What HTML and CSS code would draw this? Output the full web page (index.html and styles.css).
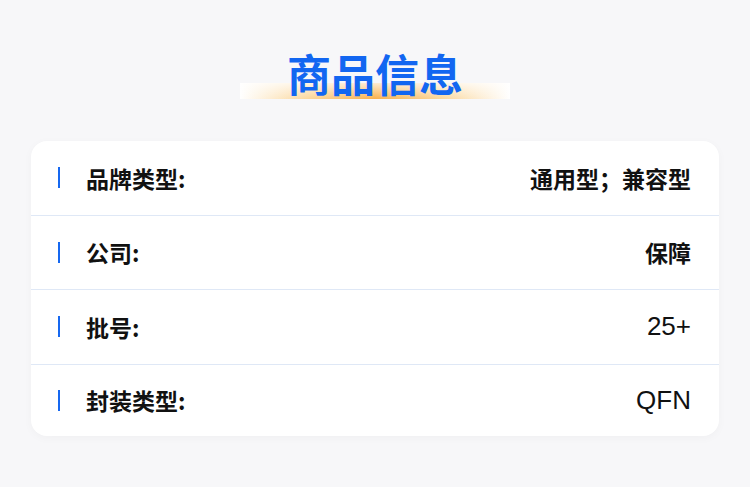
FILE: index.html
```html
<!DOCTYPE html>
<html lang="zh">
<head>
<meta charset="utf-8">
<link rel="stylesheet" href="styles.css">
</head>
<body>
<div class="page">
  <div class="title-wrap">
    <div class="title-bg"></div>
    <h1 class="title">商品信息</h1>
  </div>
  <div class="card">
    <div class="row"><span class="bar"></span><span class="label">品牌类型:</span><span class="value">通用型；兼容型</span></div>
    <div class="row"><span class="bar"></span><span class="label">公司:</span><span class="value">保障</span></div>
    <div class="row"><span class="bar"></span><span class="label">批号:</span><span class="value latin">25+</span></div>
    <div class="row"><span class="bar"></span><span class="label">封装类型:</span><span class="value latin">QFN</span></div>
  </div>
</div>
</body>
</html>
```
FILE: styles.css
```css
* { box-sizing: border-box; }
html, body { margin: 0; padding: 0; }
body {
  background: #f7f7f9;
  font-family: "Liberation Sans", "Noto Sans CJK SC", sans-serif;
  width: 750px;
  height: 487px;
  overflow: hidden;
}
.page {
  padding: 48px 31px 0 31px;
  display: flex;
  flex-direction: column;
  align-items: center;
}
.title-wrap {
  position: relative;
  width: 270px;
  height: 51px;
  display: flex;
  justify-content: center;
  margin-bottom: 42px;
}
.title-bg {
  position: absolute;
  left: 0;
  right: 0;
  top: 35px;
  height: 16px;
  background:
    linear-gradient(to bottom, rgba(255,255,255,0.75), rgba(255,255,255,0)),
    linear-gradient(to right, #ffffff 0%, #fbd79c 25%, #f8b04a 50%, #fbd79c 75%, #ffffff 100%);
}
.title {
  position: relative;
  margin: 0;
  font-family: "Noto Sans CJK SC", sans-serif;
  font-size: 44px;
  line-height: 50px;
  font-weight: 700;
  color: #1266f1;
}
.card {
  width: 688px;
  height: 295px;
  background: #ffffff;
  border-radius: 16px;
  box-shadow: 0 2px 10px rgba(0,0,0,0.03);
  display: flex;
  flex-direction: column;
}
.row {
  height: 74.5px;
  display: flex;
  align-items: center;
  padding: 0 28px 0 27px;
  border-bottom: 1px solid #dfe8f6;
}
.row:last-child { border-bottom: none; flex: 1; }
.bar {
  width: 2px;
  height: 21px;
  background: #1668f0;
  margin-right: 26px;
}
.label {
  font-family: "Noto Sans CJK SC", sans-serif;
  font-size: 23px;
  font-weight: 700;
  color: #111;
}
.value {
  margin-left: auto;
  font-family: "Noto Sans CJK SC", sans-serif;
  font-size: 23px;
  font-weight: 700;
  color: #111;
}
.value.latin {
  font-family: "Liberation Sans", sans-serif;
  font-weight: 400;
  font-size: 26px;
}
```
